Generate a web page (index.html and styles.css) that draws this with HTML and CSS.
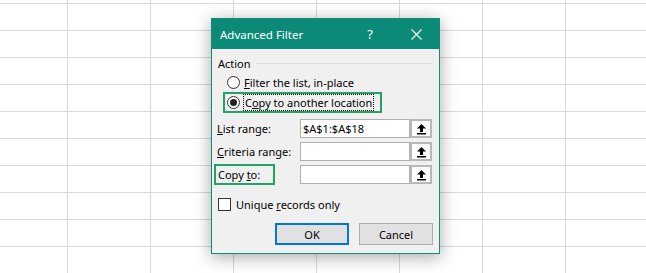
FILE: index.html
```html
<!DOCTYPE html>
<html>
<head>
  <title>Advanced Filter</title>
  <link rel="stylesheet" href="styles.css">
</head>
<body>
  <div class="dialog">
    <div class="titlebar">
      <span class="title">Advanced Filter</span>
      <span class="tb-btn help">?</span>
      <span class="tb-btn close">
        <svg width="11" height="11" viewBox="0 0 11 11"><path d="M0.5 0.5 L10.5 10.5 M10.5 0.5 L0.5 10.5" stroke="#fff" stroke-width="1.2"/></svg>
      </span>
    </div>

    <div class="content">
      <div class="group-head">
        <span>Action</span>
        <span class="rule"></span>
      </div>

      <div class="option first">
        <span class="radio"></span>
        <span><u>F</u>ilter the list, in-place</span>
      </div>
      <div class="option mark">
        <span class="radio checked"></span>
        <span class="focus">C<u>o</u>py to another location</span>
      </div>

      <div class="field-row">
        <span class="label"><span><u>L</u>ist range:</span></span>
        <span class="ref">
          <span class="ref-text">$A$1:$A$18</span>
          <span class="ref-btn"><svg width="11" height="12" viewBox="0 0 11 12"><path d="M5.5 1 L10 5.5 L7 5.5 L7 9 L4 9 L4 5.5 L1 5.5 Z" fill="#000"/><rect x="1" y="10" width="9" height="1.5" fill="#000"/></svg></span>
        </span>
      </div>
      <div class="field-row">
        <span class="label"><span><u>C</u>riteria range:</span></span>
        <span class="ref">
          <span class="ref-text"></span>
          <span class="ref-btn"><svg width="11" height="12" viewBox="0 0 11 12"><path d="M5.5 1 L10 5.5 L7 5.5 L7 9 L4 9 L4 5.5 L1 5.5 Z" fill="#000"/><rect x="1" y="10" width="9" height="1.5" fill="#000"/></svg></span>
        </span>
      </div>
      <div class="field-row">
        <span class="label"><span class="mark-label"><span>Copy <u>t</u>o:</span></span></span>
        <span class="ref">
          <span class="ref-text"></span>
          <span class="ref-btn"><svg width="11" height="12" viewBox="0 0 11 12"><path d="M5.5 1 L10 5.5 L7 5.5 L7 9 L4 9 L4 5.5 L1 5.5 Z" fill="#000"/><rect x="1" y="10" width="9" height="1.5" fill="#000"/></svg></span>
        </span>
      </div>

      <div class="check-row">
        <span class="checkbox"></span>
        <span>Unique <u>r</u>ecords only</span>
      </div>

      <div class="buttons">
        <span class="btn default">OK</span>
        <span class="btn">Cancel</span>
      </div>
    </div>
  </div>
</body>
</html>
```

FILE: styles.css
```css
html, body {
  height: 100%;
}

body {
  margin: 0;
  font-family: "Noto Sans", "Open Sans", sans-serif;
  font-size: 11px;
  color: #000;
  background-color: #fff;
  background-image:
    linear-gradient(to right, #d9d9d9 1px, transparent 1px),
    linear-gradient(to bottom, #d9d9d9 1px, transparent 1px);
  background-size: 83px 27px;
  background-position: 67px 3px;
  overflow: hidden;
}

.dialog {
  box-sizing: border-box;
  width: 229px;
  height: 236px;
  margin: 18px 0 0 211px;
  border: 1px solid #128b7a;
  background-color: #f0f0f0;
  box-shadow: 0 3px 16px rgba(0, 0, 0, 0.35);
}

.titlebar {
  display: flex;
  align-items: center;
  height: 30px;
  background-color: #0b8a77;
  color: #fff;
}

.title {
  flex: 1;
  padding-left: 8px;
  font-size: 11.5px;
}

.tb-btn {
  width: 46px;
  display: flex;
  justify-content: center;
  align-items: center;
  font-size: 13px;
}

.content {
  padding: 6px 6px 0 5px;
}

.group-head {
  display: flex;
  align-items: center;
  height: 16px;
  padding-left: 1px;
}

.rule {
  flex: 1;
  height: 1px;
  margin-left: 5px;
  background-color: #dcdcdc;
}

.option {
  display: flex;
  align-items: center;
  gap: 4px;
  height: 19px;
  padding-left: 10px;
}

.option.first {
  margin-top: 2px;
}

.option.mark {
  box-sizing: border-box;
  width: 159px;
  height: 21px;
  margin-left: 6px;
  padding-left: 2px;
  border: 2px solid #21a366;
}

.radio {
  box-sizing: border-box;
  width: 13px;
  height: 13px;
  border: 1px solid #333;
  border-radius: 50%;
  background-color: #fff;
  display: flex;
  justify-content: center;
  align-items: center;
}

.radio.checked::after {
  content: "";
  width: 7px;
  height: 7px;
  border-radius: 50%;
  background-color: #222;
}

.focus {
  outline: 1px dotted #000;
  padding: 0 1px;
  line-height: 15px;
}

.field-row {
  display: flex;
  align-items: center;
  height: 19px;
  margin-top: 4px;
}

.option.mark + .field-row {
  margin-top: 6px;
}

.label {
  width: 83px;
  display: flex;
  align-items: center;
}

.mark-label {
  box-sizing: border-box;
  width: 61px;
  height: 21px;
  margin-left: -3px;
  padding-left: 2px;
  border: 2px solid #21a366;
  display: flex;
  align-items: center;
}

.ref {
  display: flex;
  height: 19px;
}

.ref-text {
  box-sizing: border-box;
  width: 110px;
  height: 19px;
  padding-left: 2px;
  border: 1px solid #b0b0b0;
  background-color: #fff;
  line-height: 17px;
}

.ref-btn {
  box-sizing: border-box;
  width: 22px;
  height: 19px;
  border: 2px solid #b8b8b8;
  background-color: #fcfcfc;
  display: flex;
  justify-content: center;
  align-items: center;
}

.check-row {
  display: flex;
  align-items: center;
  gap: 5px;
  height: 14px;
  margin-top: 13px;
  padding-left: 1px;
}

.checkbox {
  box-sizing: border-box;
  width: 13px;
  height: 13px;
  border: 1px solid #333;
  background-color: #fff;
}

.buttons {
  display: flex;
  justify-content: flex-end;
  gap: 10px;
  margin-top: 12px;
}

.btn {
  box-sizing: border-box;
  width: 74px;
  height: 22px;
  border: 1px solid #adadad;
  background-color: #e1e1e1;
  display: flex;
  justify-content: center;
  align-items: center;
}

.btn.default {
  border: 2px solid #0078d7;
}
```
